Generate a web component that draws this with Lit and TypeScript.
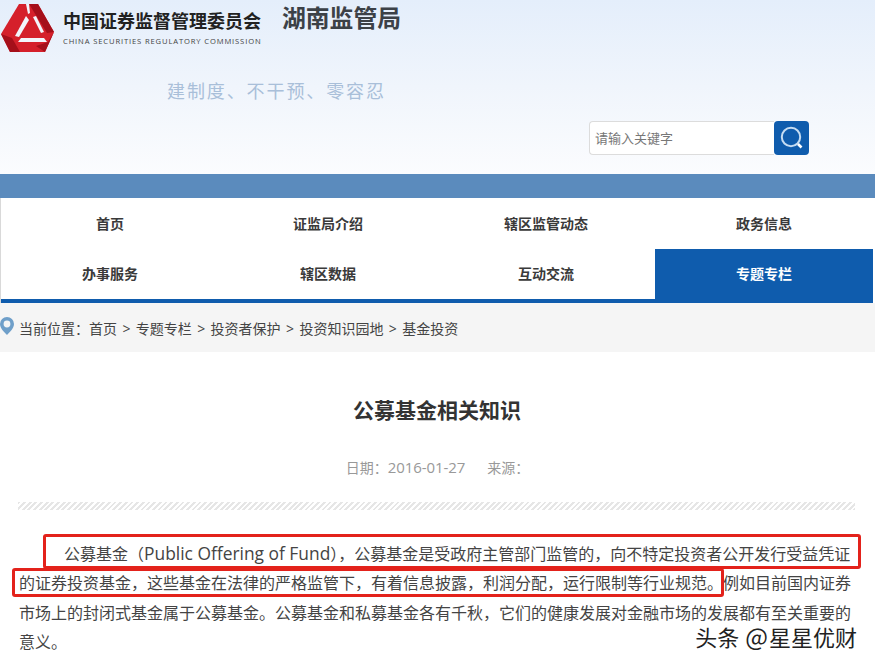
import { LitElement, html, css } from "lit";
import { customElement } from "lit/decorators.js";

const NAV = ["首页", "证监局介绍", "辖区监管动态", "政务信息", "办事服务", "辖区数据", "互动交流", "专题专栏"];
const CRUMBS = ["首页", "专题专栏", "投资者保护", "投资知识园地", "基金投资"];

@customElement("app-root")
export class AppRoot extends LitElement {
  static styles = css`
    :host {
      display: block;
      position: relative;
      width: 875px;
      height: 668px;
      overflow: hidden;
      background: #fff;
      font-family: "Noto Sans CJK SC", "Noto Sans", sans-serif;
      color: #333;
    }
    .top {
      height: 174px;
      box-sizing: border-box;
      background: linear-gradient(180deg, #e4eefb 0%, #f0f5fc 50%, #fbfcfe 100%);
      display: flex;
      flex-direction: column;
    }
    .brand {
      display: flex;
      align-items: flex-start;
      height: 76px;
    }
    .logo { width: 60px; height: 56px; margin-right: 4px; flex: none; }
    .org { display: flex; flex-direction: column; padding-top: 8px; width: 218px; margin-left: -1px; margin-right: 1px; }
    .org-cn { font-size: 18px; font-weight: 700; line-height: 24px; color: #222; white-space: nowrap; }
    .org-en { font-family: "Open Sans", sans-serif; font-size: 7.6px; line-height: 12px; margin-top: 3px; color: #444; letter-spacing: 0.87px; white-space: nowrap; }
    .bureau { font-size: 23.8px; font-weight: 700; line-height: 34px; color: #3c4147; white-space: nowrap; }
    .slogan { margin: 0 0 0 167px; font-size: 18px; line-height: 28px; letter-spacing: 1.9px; color: #a9bfd9; white-space: nowrap; }
    .search { display: flex; margin: 17px 0 0 589px; width: 220px; height: 34px; }
    .search-box {
      flex: 1; box-sizing: border-box; border: 1px solid #dcdcdc; border-right: 0;
      border-radius: 4px 0 0 4px; background: #fff; font-size: 13px; line-height: 31px;
      color: #777; padding-left: 5px;
    }
    .search-btn { width: 35px; height: 34px; background: #0f5cad; border-radius: 4px; display: flex; align-items: center; justify-content: center; }
    .band { height: 24px; background: #5b8bbd; }
    .nav {
      width: 873px; height: 105px; box-sizing: border-box;
      display: grid; grid-template-columns: repeat(4, 1fr); grid-template-rows: 51px 54px;
      border-left: 1px solid #d9d9d9;
    }
    .nav-item {
      display: flex; align-items: center; justify-content: center;
      font-size: 14px; font-weight: 700; color: #3a3a3a; padding-bottom: 2px; box-sizing: border-box;
    }
    .nav-item.row2 { border-bottom: 4px solid #0f5cad; }
    .nav-item.on { background: #0f5cad; color: #fff; }
    .crumbs {
      height: 49px; background: #f5f5f5; display: flex; align-items: center;
      font-size: 14px; color: #444; white-space: nowrap; padding-top: 1px; box-sizing: border-box;
    }
    .pin { width: 14px; height: 18px; margin: 0 5px 0 0; flex: none; position: relative; top: -2px; }
    .sep { margin: 0 5.4px; font-family: "Open Sans", sans-serif; }
    .title { margin: 42px 0 0; padding-right: 1px; text-align: center; font-size: 21px; font-weight: 700; line-height: 30px; color: #333; }
    .meta { margin-top: 32px; display: flex; justify-content: center; gap: 22px; font-size: 14px; line-height: 22px; color: #999; }
    .num { font-size: 15px; font-family: "Open Sans", "Noto Sans", sans-serif; letter-spacing: -0.1px; }
    .stripe {
      margin: 24px 20px 0 18px; height: 8px;
      background: repeating-linear-gradient(135deg, #e6e6e6 0 2px, #fff 2px 4px);
    }
    .body {
      margin: 29px 0 0 19px; width: 836px;
      font-size: 16px; line-height: 29.3px; color: #444; text-indent: 45px;
    }
    .lat { font-family: "Open Sans", sans-serif; font-size: 17.4px; line-height: 1; }
    .mark { position: absolute; box-sizing: border-box; border: 3px solid #e3221b; border-radius: 3px; }
    .m1 { left: 43px; top: 534px; width: 818px; height: 35px; }
    .m2 { left: 12px; top: 568px; width: 712px; height: 29px; }
    .wm {
      position: absolute; right: 18px; top: 621px; font-size: 22px; line-height: 30px; color: #222;
      text-shadow: 0 0 2px #fff; white-space: nowrap;
    }
    .at { font-size: 24px; margin: 0 1px; }
  `;

  render() {
    return html`
      <div class="top">
        <div class="brand">
          <svg class="logo" viewBox="0 0 60 56">
            <polygon fill="#d5202b" points="1,34 19,4 38,4 54,32 45,52 10,52" />
            <polygon fill="#a50f1a" points="1,34 10,52 20,52 12,38" />
            <polygon fill="#a50f1a" points="29,4 38,4 54,32 47,33" />
            <polygon fill="#a50f1a" points="36,46 45,52 54,32 48,42" />
            <polygon fill="#f2f6fc" points="26,4 29,4 30,13 28,14" />
            <polygon fill="#f2f6fc" points="26,16 29,20 19,37 15,36" />
            <polygon fill="#f2f6fc" points="33,17 36,16 44,32 41,33" />
            <polygon fill="#f2f6fc" points="21,38 44,38 47,42 18,42" />
          </svg>
          <div class="org">
            <div class="org-cn">中国证券监督管理委员会</div>
            <div class="org-en">CHINA SECURITIES REGULATORY COMMISSION</div>
          </div>
          <div class="bureau">湖南监管局</div>
        </div>
        <p class="slogan">建制度、不干预、零容忍</p>
        <div class="search">
          <div class="search-box">请输入关键字</div>
          <div class="search-btn">
            <svg width="26" height="26" viewBox="0 0 26 26" fill="none" stroke="#c5dcf2">
              <circle cx="12" cy="12" r="9.2" stroke-width="2" />
              <path d="M19 19l3.5 3.5" stroke="#fff" stroke-width="2.6" />
            </svg>
          </div>
        </div>
      </div>
      <div class="band"></div>
      <nav class="nav">
        ${NAV.map(
          (n, i) => html`<div class="nav-item ${i > 3 ? "row2" : ""} ${i === 7 ? "on" : ""}">${n}</div>`
        )}
      </nav>
      <div class="crumbs">
        <svg class="pin" viewBox="0 0 14 18">
          <path fill="#6f9fc9" fill-rule="evenodd" d="M7 0a7 7 0 0 1 7 7c0 4-4 8-7 11-3-3-7-7-7-11a7 7 0 0 1 7-7zm0 3.6a3.4 3.4 0 1 0 0 6.8 3.4 3.4 0 0 0 0-6.8z" />
        </svg>
        <span>当前位置：</span>
        ${CRUMBS.map((c, i) => html`${i ? html`<span class="sep">&gt;</span>` : ""}<span>${c}</span>`)}
      </div>
      <h1 class="title">公募基金相关知识</h1>
      <div class="meta"><span>日期：<span class="num">2016-01-27</span></span><span>来源：</span></div>
      <div class="stripe"></div>
      <p class="body">公募基金（<span class="lat">Public Offering of Fund</span>），公募基金是受政府主管部门监管的，向不特定投资者公开发行受益凭证的证券投资基金，这些基金在法律的严格监管下，有着信息披露，利润分配，运行限制等行业规范。例如目前国内证券市场上的封闭式基金属于公募基金。公募基金和私募基金各有千秋，它们的健康发展对金融市场的发展都有至关重要的意义。</p>
      <div class="mark m1"></div>
      <div class="mark m2"></div>
      <div class="wm">头条 <span class="at">@</span>星星优财</div>
    `;
  }
}
